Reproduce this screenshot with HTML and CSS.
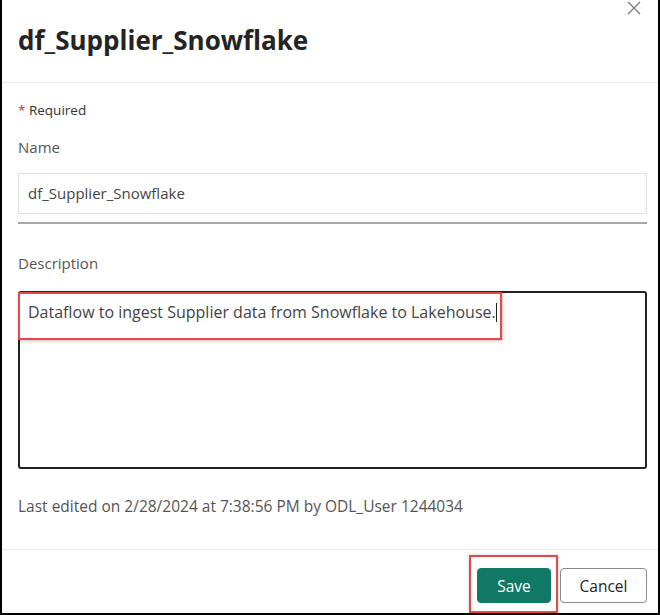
FILE: index.html
```html
<!DOCTYPE html>
<html lang="en">
<head>
<meta charset="utf-8">
<title>df_Supplier_Snowflake</title>
<link rel="stylesheet" href="styles.css">
</head>
<body>
<div class="dialog">
  <button class="close" aria-label="Close">
    <svg width="14" height="14" viewBox="0 0 14 14"><path d="M1 1L13 13M13 1L1 13" stroke="#777" stroke-width="1.2" fill="none"/></svg>
  </button>
  <header class="header">
    <h1 class="title">df_Supplier_Snowflake</h1>
  </header>
  <main class="body">
    <div class="required"><span class="star">*</span> Required</div>
    <label class="label name-label">Name</label>
    <div class="input">df_Supplier_Snowflake</div>
    <div class="underline"></div>
    <label class="label desc-label">Description</label>
    <div class="textarea">
      <span class="desc-text">Dataflow to ingest Supplier data from Snowflake to Lakehouse.</span><span class="caret"></span>
      <div class="highlight"></div>
    </div>
    <div class="edited">Last edited on 2/28/2024 at 7:38:56 PM by ODL_User 1244034</div>
  </main>
  <footer class="footer">
    <div class="save-wrap">
      <button class="btn btn-primary">Save</button>
    </div>
    <button class="btn btn-secondary">Cancel</button>
  </footer>
</div>
</body>
</html>
```
FILE: styles.css
```css
* { box-sizing: border-box; }
html, body { margin: 0; padding: 0; background: #fff; }
body { font-family: "Open Sans", "Noto Sans", sans-serif; color: #444; }

.dialog {
  position: relative;
  width: 660px;
  height: 615px;
  border-left: 2px solid #000;
  border-right: 2px solid #000;
  border-bottom: 2px solid #000;
  display: flex;
  flex-direction: column;
  background: #fff;
}

.close {
  position: absolute;
  top: 0;
  left: 624px;
  width: 16px;
  height: 16px;
  padding: 0;
  border: 0;
  background: transparent;
  display: flex;
  align-items: center;
  justify-content: center;
}

.header {
  height: 83px;
  border-bottom: 1px solid #ebebeb;
  padding: 22px 0 0 16px;
  flex: none;
}
.title {
  margin: 0;
  font-size: 26px;
  line-height: 36px;
  font-weight: 700;
  color: #242424;
  letter-spacing: 0;
}

.body {
  flex: 1;
  padding: 18px 11px 0 16px;
  display: flex;
  flex-direction: column;
}

.required {
  font-size: 13.5px;
  line-height: 18px;
  color: #333;
}
.star { color: #c4314b; }

.label {
  display: block;
  font-size: 15px;
  line-height: 20px;
  color: #555;
}
.name-label { margin-top: 18px; }
.desc-label { margin-top: 29px; }

.input {
  margin-top: 16px;
  height: 41px;
  border: 1px solid #e0e0e0;
  padding: 0 9px;
  font-size: 15px;
  line-height: 39px;
  color: #444;
}
.underline {
  margin-top: 8px;
  height: 2px;
  background: #a8a8a8;
}

.textarea {
  position: relative;
  margin-top: 18px;
  height: 178px;
  border: 2px solid #222;
  border-radius: 3px;
  padding: 9px 8px;
  font-size: 16px;
  line-height: 20px;
  color: #444;
}
.caret {
  display: inline-block;
  width: 1px;
  height: 19px;
  background: #222;
  vertical-align: -4px;
}
.highlight {
  position: absolute;
  left: -2px;
  top: -1px;
  width: 484px;
  height: 48px;
  border: 2px solid #e8474a;
  box-shadow: 1px 1px 3px rgba(0,0,0,0.25);
  pointer-events: none;
}

.edited {
  margin-top: 27px;
  font-size: 15.5px;
  line-height: 20px;
  color: #555;
}

.footer {
  flex: none;
  height: 64px;
  border-top: 1px solid #ebebeb;
  padding: 6px 11px 0 0;
  display: flex;
  justify-content: flex-end;
  align-items: flex-end;
}
.save-wrap {
  height: 58px;
  padding: 11px 5px 8px 6px;
  border: 2px solid #e8474a;
  box-shadow: 0 0 3px rgba(0,0,0,0.2);
  margin-right: 2px;
}
.btn {
  height: 35px;
  border-radius: 4px;
  font-family: "Open Sans", "Noto Sans", sans-serif;
  font-size: 15.5px;
  padding: 0;
  cursor: pointer;
}
.btn-primary {
  width: 74px;
  background: #117865;
  border: 1px solid #117865;
  color: #fff;
}
.btn-secondary {
  width: 87px;
  margin-bottom: 10px;
  background: #fff;
  border: 1px solid #8a8a8a;
  color: #242424;
}
```
